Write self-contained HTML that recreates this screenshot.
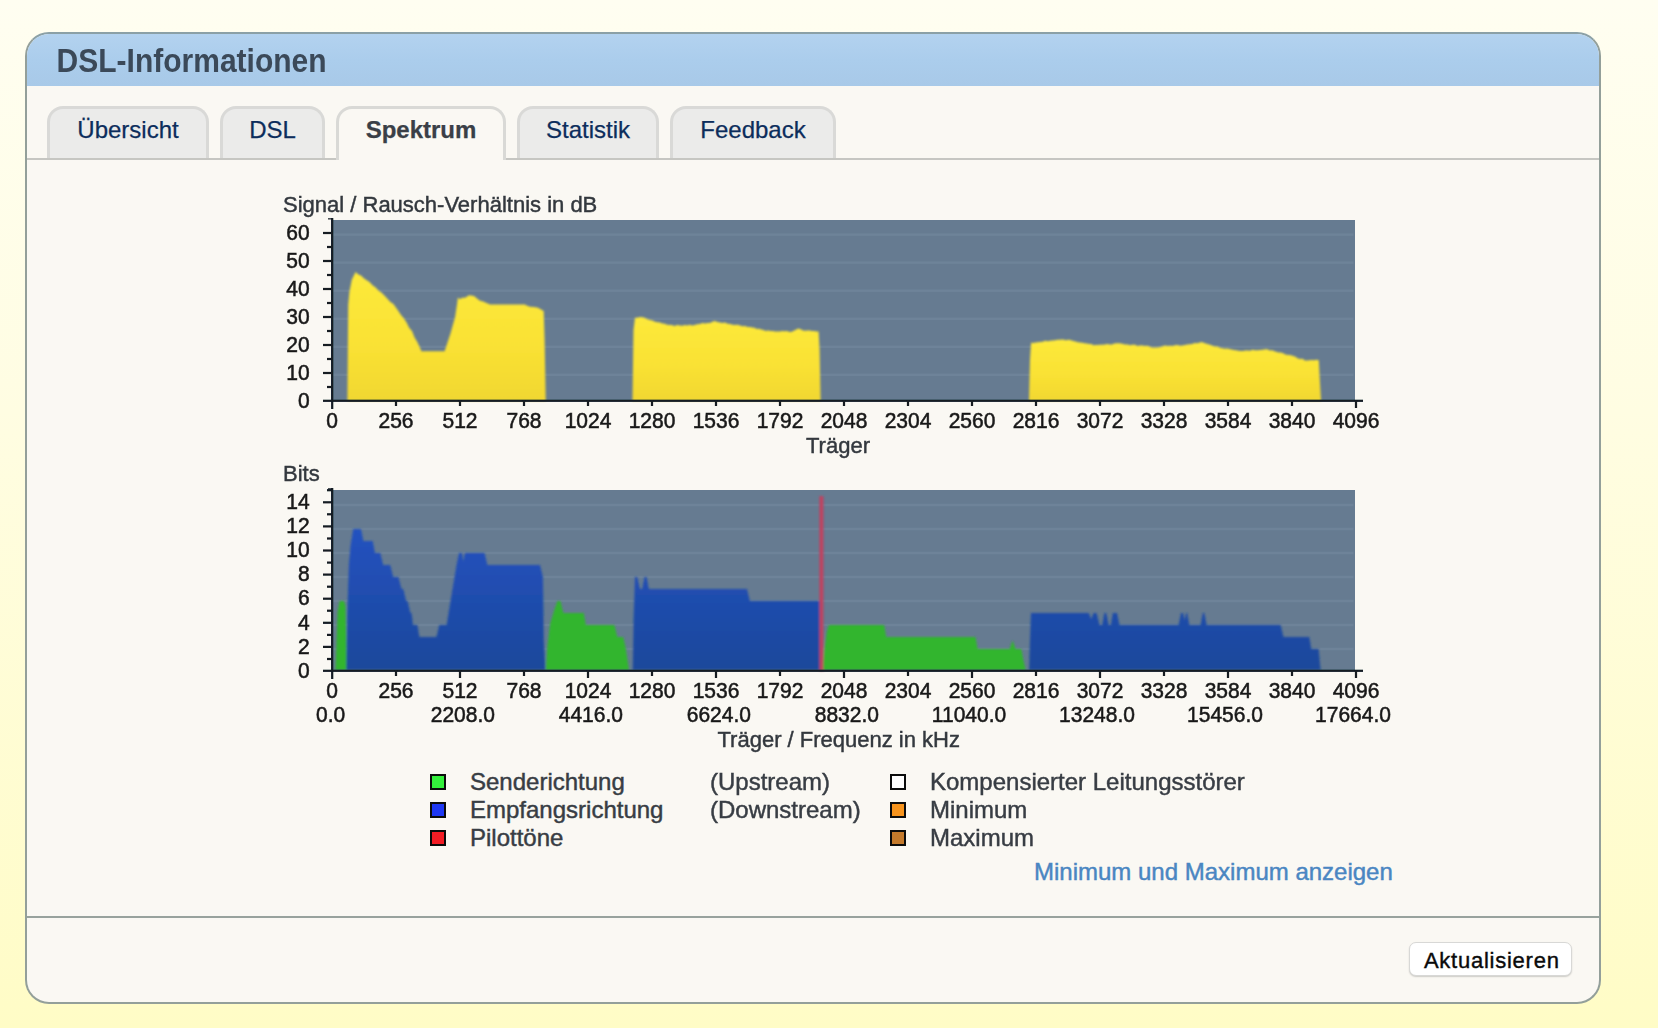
<!DOCTYPE html>
<html lang="de">
<head>
<meta charset="utf-8">
<title>DSL-Informationen</title>
<style>
html,body{margin:0;padding:0;}
body{width:1658px;height:1028px;overflow:hidden;position:relative;
  font-family:"Liberation Sans",sans-serif;color:#3a4048;
  background:linear-gradient(180deg,#fffef1 0%,#fffde2 40%,#fffcc6 100%);}
#panel{position:absolute;left:25px;top:32px;width:1572px;height:968px;border:2px solid #939f9a;border-top-color:#8ba0a6;
  border-radius:24px;background:#faf8f3;overflow:hidden;}
#head{position:absolute;left:0;top:0;width:100%;height:52px;
  background:linear-gradient(180deg,#b3d2ef 0%,#abcdec 50%,#a8c9e8 100%);}
#head h1{margin:0;position:absolute;left:29.6px;top:10px;font-size:30px;line-height:36px;font-weight:bold;color:#3b4959;transform:scale(1.0,1.085);transform-origin:0 29px;white-space:nowrap;}
#tabline{position:absolute;left:0;top:124px;width:100%;height:2px;background:#c6c6c2;}
.tab{position:absolute;top:72px;height:52px;box-sizing:border-box;border:3px solid #d9d9d7;border-bottom:none;
  border-radius:16px 16px 0 0;background:#ebebea;color:#0c2d5c;font-size:24px;line-height:41px;text-align:center;-webkit-text-stroke:0.25px;}
.tab.act{background:#faf8f3;color:#3a3f47;font-weight:bold;height:54px;border-color:#d9d9d6;z-index:3;}
.t{position:absolute;white-space:nowrap;-webkit-text-stroke:0.45px;}
#sep{position:absolute;left:0;top:882px;width:100%;height:2px;background:#98a29d;}
#btn{position:absolute;left:1382px;top:908px;width:161px;height:32px;border:1px solid #d8d8d6;border-radius:7px;
  background:#fff;box-shadow:0 1px 1.5px rgba(0,0,0,0.18);font-size:22px;line-height:35.4px;text-align:center;color:#0a0a0a;letter-spacing:0.75px;text-indent:2.6px;-webkit-text-stroke:0.4px;overflow:hidden;}
.sq{position:absolute;width:12px;height:12px;border:2px solid #0c0c0c;}
.lg{position:absolute;font-size:24px;line-height:28px;color:#383d44;white-space:nowrap;-webkit-text-stroke:0.45px #383d44;}
</style>
</head>
<body>
<div id="panel">
  <div id="head"><h1>DSL-Informationen</h1></div>
  <div class="tab" style="left:20px;width:162px;">Übersicht</div>
  <div class="tab" style="left:193px;width:105px;">DSL</div>
  <div class="tab act" style="left:309px;width:170px;">Spektrum</div>
  <div class="tab" style="left:490px;width:142px;">Statistik</div>
  <div class="tab" style="left:643px;width:166px;">Feedback</div>
  <div id="tabline"></div>
  <div id="sep"></div>
  <div id="btn">Aktualisieren</div>
</div>
<svg width="1658" height="1028" viewBox="0 0 1658 1028" style="position:absolute;left:0;top:0">
<defs>
<linearGradient id="gy" x1="0" y1="0" x2="0" y2="1"><stop offset="0" stop-color="#fde93b"/><stop offset="0.6" stop-color="#f9e134"/><stop offset="1" stop-color="#f1d730"/></linearGradient>
<linearGradient id="gb" gradientUnits="userSpaceOnUse" x1="0" y1="528" x2="0" y2="670"><stop offset="0" stop-color="#2452c0"/><stop offset="1" stop-color="#1b489b"/></linearGradient>
<filter id="bl" x="-2%" y="-2%" width="104%" height="104%"><feGaussianBlur stdDeviation="0.85"/></filter>
<filter id="bt" x="-2%" y="-10%" width="104%" height="120%"><feGaussianBlur stdDeviation="0.7"/></filter>
<filter id="ba" x="-2%" y="-10%" width="104%" height="120%"><feGaussianBlur stdDeviation="0.45"/></filter>
</defs>
<rect x="331" y="220" width="1024" height="180" fill="#667b91"/>
<rect x="333" y="373.6" width="1020.5" height="2.4" fill="#7990a5" opacity="0.42" filter="url(#ba)"/>
<rect x="333" y="345.6" width="1020.5" height="2.4" fill="#7990a5" opacity="0.42" filter="url(#ba)"/>
<rect x="333" y="317.6" width="1020.5" height="2.4" fill="#7990a5" opacity="0.42" filter="url(#ba)"/>
<rect x="333" y="289.5" width="1020.5" height="2.4" fill="#7990a5" opacity="0.42" filter="url(#ba)"/>
<rect x="333" y="261.4" width="1020.5" height="2.4" fill="#7990a5" opacity="0.42" filter="url(#ba)"/>
<rect x="333" y="233.4" width="1020.5" height="2.4" fill="#7990a5" opacity="0.42" filter="url(#ba)"/>
<g filter="url(#bl)">
<path d="M347.4 401.0 L347.4 400.0 L348.2 305.0 L349.4 292.0 L351.8 279.8 L355.6 272.1 L358.3 274.5 L361.0 275.4 L363.8 278.3 L366.7 280.2 L369.5 282.0 L372.5 285.3 L375.4 287.3 L378.4 290.5 L381.4 292.6 L384.4 295.5 L387.4 298.7 L390.4 302.1 L393.4 304.0 L395.9 307.4 L398.5 311.2 L401.2 315.3 L404.0 318.5 L406.7 322.7 L409.3 327.9 L412.0 331.1 L414.6 337.5 L417.3 342.0 L419.9 347.6 L421.3 351.0 L421.3 351.3 L444.6 351.3 L444.6 351.3 L447.5 342.4 L450.4 333.8 L455.1 317.1 L457.1 303.8 L457.9 297.5 L460.0 299.3 L462.0 297.8 L465.0 297.8 L469.1 295.2 L474.0 296.1 L477.0 298.6 L480.0 300.7 L483.2 301.6 L486.4 303.0 L489.6 304.2 L489.6 304.5 L525.3 304.5 L525.3 305.0 L530.0 306.7 L534.0 307.1 L538.0 307.8 L543.7 311.0 L544.6 340.0 L545.7 400.0 L545.7 401.0 Z" fill="url(#gy)"/>
<path d="M632.5 401.0 L632.5 400.0 L633.5 330.0 L635.0 317.8 L637.5 317.7 L640.0 317.1 L643.9 317.4 L647.0 318.9 L650.0 319.9 L652.5 320.5 L655.0 321.8 L657.5 322.3 L660.0 322.5 L662.3 323.4 L664.7 323.8 L667.0 324.7 L669.4 325.0 L671.7 324.9 L674.5 325.9 L677.2 325.0 L680.0 325.5 L682.4 325.8 L684.8 325.1 L687.2 325.4 L689.6 324.8 L692.0 325.5 L694.7 325.0 L697.3 324.2 L700.0 324.0 L702.5 323.1 L705.0 323.4 L707.5 323.1 L710.0 322.9 L712.4 321.7 L714.8 321.1 L717.4 322.1 L720.0 322.5 L722.5 323.0 L725.0 322.6 L727.5 323.7 L730.0 324.0 L732.5 324.8 L735.0 324.9 L737.5 324.7 L740.0 325.4 L742.5 326.2 L745.0 325.9 L747.5 327.0 L750.0 327.1 L752.2 327.5 L754.5 327.8 L756.8 329.1 L759.0 328.8 L761.2 329.4 L763.5 330.0 L765.8 331.0 L768.0 330.5 L770.4 331.0 L772.8 331.1 L775.2 331.6 L777.6 331.5 L780.0 331.6 L782.2 331.0 L784.4 331.2 L786.6 331.1 L788.9 331.8 L791.1 331.9 L793.3 331.0 L795.8 329.7 L798.4 328.5 L800.7 329.3 L803.0 330.5 L805.2 330.8 L807.5 330.5 L809.7 330.4 L811.9 331.0 L814.1 331.1 L816.4 331.5 L818.6 331.6 L819.6 350.0 L820.6 400.0 L820.6 401.0 Z" fill="url(#gy)"/>
<path d="M1029.0 401.0 L1029.0 400.0 L1030.0 360.0 L1031.1 342.7 L1033.3 343.1 L1035.5 342.6 L1037.8 342.2 L1040.0 342.1 L1042.6 341.8 L1045.2 340.7 L1047.7 341.3 L1050.3 340.7 L1052.9 340.4 L1055.3 340.3 L1057.6 339.7 L1060.0 339.7 L1062.9 339.5 L1065.9 340.2 L1068.8 339.7 L1071.0 340.2 L1073.3 341.0 L1075.5 341.5 L1077.8 342.2 L1080.0 342.5 L1082.2 342.7 L1084.5 343.2 L1086.8 343.4 L1089.0 344.0 L1091.2 343.9 L1093.5 345.2 L1095.8 345.1 L1098.0 344.9 L1100.3 344.8 L1102.7 344.8 L1105.0 344.6 L1107.3 344.0 L1109.6 344.6 L1112.0 344.4 L1114.3 343.5 L1116.6 343.2 L1119.4 343.2 L1122.2 343.7 L1125.0 344.4 L1127.5 344.5 L1130.0 345.3 L1132.5 344.7 L1135.0 344.7 L1137.5 346.0 L1140.0 345.6 L1142.4 345.4 L1144.8 346.1 L1147.1 345.7 L1149.5 346.6 L1151.9 347.4 L1154.2 347.5 L1156.6 347.5 L1159.0 347.2 L1162.0 346.5 L1165.0 345.4 L1167.5 346.0 L1170.0 345.7 L1172.5 345.9 L1175.0 345.3 L1177.5 345.1 L1180.0 345.7 L1182.5 345.5 L1185.0 345.0 L1187.5 344.5 L1190.0 344.2 L1192.3 343.9 L1194.6 343.0 L1196.9 343.2 L1199.2 342.7 L1201.5 342.1 L1204.3 342.9 L1207.2 344.0 L1210.0 344.7 L1212.5 345.8 L1215.0 346.6 L1217.5 346.6 L1220.0 347.7 L1222.5 348.3 L1225.0 348.8 L1227.2 348.6 L1229.4 348.9 L1231.6 349.4 L1233.8 349.9 L1236.0 350.3 L1238.3 350.8 L1240.7 351.1 L1243.0 351.0 L1245.3 350.5 L1247.7 350.6 L1250.0 350.8 L1252.5 349.7 L1255.1 350.2 L1257.6 350.3 L1260.1 350.0 L1262.7 349.8 L1265.2 349.3 L1267.5 349.3 L1269.7 350.4 L1272.0 350.2 L1275.2 351.6 L1278.5 352.6 L1280.8 352.6 L1283.1 353.3 L1285.4 354.6 L1287.7 355.1 L1290.0 355.1 L1292.5 355.8 L1295.0 356.6 L1297.5 358.2 L1300.0 358.9 L1302.5 358.8 L1305.0 360.4 L1307.3 360.6 L1309.6 360.3 L1311.9 360.0 L1314.2 360.3 L1316.5 359.8 L1318.8 360.3 L1319.8 380.0 L1321.0 400.0 L1321.0 401.0 Z" fill="url(#gy)"/>
</g>
<rect x="331" y="490" width="1024" height="180" fill="#667b91"/>
<rect x="333" y="647.8" width="1020.5" height="2.4" fill="#7990a5" opacity="0.42" filter="url(#ba)"/>
<rect x="333" y="623.8" width="1020.5" height="2.4" fill="#7990a5" opacity="0.42" filter="url(#ba)"/>
<rect x="333" y="599.8" width="1020.5" height="2.4" fill="#7990a5" opacity="0.42" filter="url(#ba)"/>
<rect x="333" y="575.8" width="1020.5" height="2.4" fill="#7990a5" opacity="0.42" filter="url(#ba)"/>
<rect x="333" y="551.8" width="1020.5" height="2.4" fill="#7990a5" opacity="0.42" filter="url(#ba)"/>
<rect x="333" y="527.8" width="1020.5" height="2.4" fill="#7990a5" opacity="0.42" filter="url(#ba)"/>
<rect x="333" y="503.8" width="1020.5" height="2.4" fill="#7990a5" opacity="0.42" filter="url(#ba)"/>
<g filter="url(#bl)">
<path d="M335.5 670.0 L336.4 645.0 L337.6 612.0 L339.6 601.0 L344.0 601.0 L345.5 606.0 L346.8 670.0 Z" fill="#30b52f"/>
<path d="M545.8 670.0 L547.3 646.8 L550.2 623.5 L554.6 608.9 L557.5 601.0 L560.4 601.0 L563.3 613.0 L583.8 613.0 L585.8 625.0 L614.4 625.0 L617.3 637.0 L623.2 637.0 L625.5 646.8 L629.0 670.0 Z" fill="#30b52f"/>
<path d="M822.5 670.0 L824.8 646.8 L826.8 632.0 L828.8 625.0 L884.2 625.0 L886.2 637.0 L975.5 637.0 L977.6 649.0 L1009.7 649.0 L1012.6 640.6 L1015.5 649.0 L1021.3 649.0 L1023.7 661.4 L1025.7 670.0 Z" fill="#30b52f"/>
<path d="M346.3 670.0 L347.2 620.0 L348.8 566.0 L350.6 545.0 L353.2 529.0 L361.0 529.0 L363.4 541.0 L372.7 541.0 L375.0 553.0 L380.3 553.0 L383.2 565.0 L390.2 565.0 L393.2 577.0 L398.4 577.0 L401.5 589.0 L403.3 589.0 L406.2 601.0 L407.6 601.0 L410.4 613.0 L411.6 613.0 L413.0 625.0 L417.4 625.0 L419.4 637.0 L436.4 637.0 L439.3 625.0 L446.6 625.0 L448.6 613.0 L450.5 601.0 L452.5 589.0 L454.5 577.0 L456.5 565.0 L459.1 553.0 L462.0 553.0 L463.2 561.4 L465.0 553.0 L484.5 553.0 L487.4 565.0 L540.0 565.0 L542.9 577.0 L543.8 640.0 L545.2 670.0 Z" fill="url(#gb)"/>
<path d="M632.8 670.0 L633.6 620.0 L634.9 577.0 L637.2 577.0 L640.0 589.0 L642.2 589.0 L644.5 577.0 L646.6 577.0 L648.9 589.0 L747.0 589.0 L749.9 601.0 L821.0 601.0 L821.0 670.0 Z" fill="url(#gb)"/>
<path d="M1029.2 670.0 L1030.0 640.0 L1031.0 613.0 L1088.8 613.0 L1091.2 619.0 L1093.6 613.0 L1096.5 613.0 L1099.6 625.0 L1102.2 625.0 L1104.4 613.0 L1106.2 613.0 L1108.7 625.0 L1110.8 625.0 L1112.9 613.0 L1117.0 613.0 L1119.5 625.0 L1178.6 625.0 L1181.0 613.0 L1183.0 613.0 L1184.7 620.2 L1186.2 613.0 L1187.2 613.0 L1189.3 625.0 L1200.6 625.0 L1202.8 613.0 L1204.3 613.0 L1206.6 625.0 L1280.6 625.0 L1283.5 637.0 L1309.3 637.0 L1311.3 649.0 L1318.6 649.0 L1319.6 660.0 L1320.6 670.0 Z" fill="url(#gb)"/>
<rect x="819.4" y="496" width="4" height="175" fill="#bf4360"/>
</g>
<g fill="#121a22" filter="url(#ba)">
<rect x="331.1" y="218" width="2.2" height="191"/>
<rect x="323" y="399.7" width="1040" height="2.2"/>
<rect x="328" y="218" width="4" height="1.6" opacity="0.75"/>
<rect x="323" y="371.9" width="9" height="2.2"/>
<rect x="323" y="343.9" width="9" height="2.2"/>
<rect x="323" y="315.9" width="9" height="2.2"/>
<rect x="323" y="287.9" width="9" height="2.2"/>
<rect x="323" y="259.9" width="9" height="2.2"/>
<rect x="323" y="231.9" width="9" height="2.2"/>
<rect x="327" y="385.9" width="5" height="2.2"/>
<rect x="327" y="357.9" width="5" height="2.2"/>
<rect x="327" y="329.9" width="5" height="2.2"/>
<rect x="327" y="301.9" width="5" height="2.2"/>
<rect x="327" y="273.9" width="5" height="2.2"/>
<rect x="327" y="245.9" width="5" height="2.2"/>
<rect x="394.9" y="400" width="2.2" height="6"/>
<rect x="458.9" y="400" width="2.2" height="6"/>
<rect x="522.9" y="400" width="2.2" height="6"/>
<rect x="586.9" y="400" width="2.2" height="6"/>
<rect x="650.9" y="400" width="2.2" height="6"/>
<rect x="714.9" y="400" width="2.2" height="6"/>
<rect x="778.9" y="400" width="2.2" height="6"/>
<rect x="842.9" y="400" width="2.2" height="6"/>
<rect x="906.9" y="400" width="2.2" height="6"/>
<rect x="970.9" y="400" width="2.2" height="6"/>
<rect x="1034.9" y="400" width="2.2" height="6"/>
<rect x="1098.9" y="400" width="2.2" height="6"/>
<rect x="1162.9" y="400" width="2.2" height="6"/>
<rect x="1226.9" y="400" width="2.2" height="6"/>
<rect x="1290.9" y="400" width="2.2" height="6"/>
<rect x="1354.9" y="400" width="2.2" height="8"/>
<rect x="331.1" y="488" width="2.2" height="191"/>
<rect x="323" y="669.7" width="1040" height="2.2"/>
<rect x="328" y="488" width="4" height="1.6" opacity="0.75"/>
<rect x="323" y="645.8" width="9" height="2.2"/>
<rect x="323" y="621.7" width="9" height="2.2"/>
<rect x="323" y="597.6" width="9" height="2.2"/>
<rect x="323" y="573.5" width="9" height="2.2"/>
<rect x="323" y="549.4" width="9" height="2.2"/>
<rect x="323" y="525.3" width="9" height="2.2"/>
<rect x="323" y="501.2" width="9" height="2.2"/>
<rect x="327" y="657.9" width="5" height="2.2"/>
<rect x="327" y="633.8" width="5" height="2.2"/>
<rect x="327" y="609.6" width="5" height="2.2"/>
<rect x="327" y="585.6" width="5" height="2.2"/>
<rect x="327" y="561.5" width="5" height="2.2"/>
<rect x="327" y="537.4" width="5" height="2.2"/>
<rect x="327" y="513.2" width="5" height="2.2"/>
<rect x="327" y="489.1" width="5" height="2.2"/>
<rect x="394.9" y="670" width="2.2" height="6"/>
<rect x="458.9" y="670" width="2.2" height="8"/>
<rect x="522.9" y="670" width="2.2" height="6"/>
<rect x="586.9" y="670" width="2.2" height="8"/>
<rect x="650.9" y="670" width="2.2" height="6"/>
<rect x="714.9" y="670" width="2.2" height="8"/>
<rect x="778.9" y="670" width="2.2" height="6"/>
<rect x="842.9" y="670" width="2.2" height="8"/>
<rect x="906.9" y="670" width="2.2" height="6"/>
<rect x="970.9" y="670" width="2.2" height="8"/>
<rect x="1034.9" y="670" width="2.2" height="6"/>
<rect x="1098.9" y="670" width="2.2" height="8"/>
<rect x="1162.9" y="670" width="2.2" height="6"/>
<rect x="1226.9" y="670" width="2.2" height="8"/>
<rect x="1290.9" y="670" width="2.2" height="6"/>
<rect x="1354.9" y="670" width="2.2" height="8"/>
</g>
<g font-family="Liberation Sans, sans-serif" font-size="22" fill="#1a1a1a" stroke="#1a1a1a" stroke-width="0.55" filter="url(#bt)">
<text transform="translate(309.6 408.4) scale(0.955 0.985)" text-anchor="end">0</text>
<text transform="translate(309.6 380.4) scale(0.955 0.985)" text-anchor="end">10</text>
<text transform="translate(309.6 352.4) scale(0.955 0.985)" text-anchor="end">20</text>
<text transform="translate(309.6 324.4) scale(0.955 0.985)" text-anchor="end">30</text>
<text transform="translate(309.6 296.4) scale(0.955 0.985)" text-anchor="end">40</text>
<text transform="translate(309.6 268.4) scale(0.955 0.985)" text-anchor="end">50</text>
<text transform="translate(309.6 240.4) scale(0.955 0.985)" text-anchor="end">60</text>
<text transform="translate(309.6 677.7) scale(0.955 0.985)" text-anchor="end">0</text>
<text transform="translate(309.6 653.6) scale(0.955 0.985)" text-anchor="end">2</text>
<text transform="translate(309.6 629.5) scale(0.955 0.985)" text-anchor="end">4</text>
<text transform="translate(309.6 605.4) scale(0.955 0.985)" text-anchor="end">6</text>
<text transform="translate(309.6 581.3) scale(0.955 0.985)" text-anchor="end">8</text>
<text transform="translate(309.6 557.2) scale(0.955 0.985)" text-anchor="end">10</text>
<text transform="translate(309.6 533.1) scale(0.955 0.985)" text-anchor="end">12</text>
<text transform="translate(309.6 509.0) scale(0.955 0.985)" text-anchor="end">14</text>
<text transform="translate(332.0 428.0) scale(0.955 0.985)" text-anchor="middle">0</text>
<text transform="translate(332.0 698.0) scale(0.955 0.985)" text-anchor="middle">0</text>
<text transform="translate(330.7 722.0) scale(0.955 0.985)" text-anchor="middle">0.0</text>
<text transform="translate(396.0 428.0) scale(0.955 0.985)" text-anchor="middle">256</text>
<text transform="translate(396.0 698.0) scale(0.955 0.985)" text-anchor="middle">256</text>
<text transform="translate(460.0 428.0) scale(0.955 0.985)" text-anchor="middle">512</text>
<text transform="translate(460.0 698.0) scale(0.955 0.985)" text-anchor="middle">512</text>
<text transform="translate(462.8 722.0) scale(0.955 0.985)" text-anchor="middle">2208.0</text>
<text transform="translate(524.0 428.0) scale(0.955 0.985)" text-anchor="middle">768</text>
<text transform="translate(524.0 698.0) scale(0.955 0.985)" text-anchor="middle">768</text>
<text transform="translate(588.0 428.0) scale(0.955 0.985)" text-anchor="middle">1024</text>
<text transform="translate(588.0 698.0) scale(0.955 0.985)" text-anchor="middle">1024</text>
<text transform="translate(590.8 722.0) scale(0.955 0.985)" text-anchor="middle">4416.0</text>
<text transform="translate(652.0 428.0) scale(0.955 0.985)" text-anchor="middle">1280</text>
<text transform="translate(652.0 698.0) scale(0.955 0.985)" text-anchor="middle">1280</text>
<text transform="translate(716.0 428.0) scale(0.955 0.985)" text-anchor="middle">1536</text>
<text transform="translate(716.0 698.0) scale(0.955 0.985)" text-anchor="middle">1536</text>
<text transform="translate(718.8 722.0) scale(0.955 0.985)" text-anchor="middle">6624.0</text>
<text transform="translate(780.0 428.0) scale(0.955 0.985)" text-anchor="middle">1792</text>
<text transform="translate(780.0 698.0) scale(0.955 0.985)" text-anchor="middle">1792</text>
<text transform="translate(844.0 428.0) scale(0.955 0.985)" text-anchor="middle">2048</text>
<text transform="translate(844.0 698.0) scale(0.955 0.985)" text-anchor="middle">2048</text>
<text transform="translate(846.8 722.0) scale(0.955 0.985)" text-anchor="middle">8832.0</text>
<text transform="translate(908.0 428.0) scale(0.955 0.985)" text-anchor="middle">2304</text>
<text transform="translate(908.0 698.0) scale(0.955 0.985)" text-anchor="middle">2304</text>
<text transform="translate(972.0 428.0) scale(0.955 0.985)" text-anchor="middle">2560</text>
<text transform="translate(972.0 698.0) scale(0.955 0.985)" text-anchor="middle">2560</text>
<text transform="translate(969.0 722.0) scale(0.955 0.985)" text-anchor="middle">11040.0</text>
<text transform="translate(1036.0 428.0) scale(0.955 0.985)" text-anchor="middle">2816</text>
<text transform="translate(1036.0 698.0) scale(0.955 0.985)" text-anchor="middle">2816</text>
<text transform="translate(1100.0 428.0) scale(0.955 0.985)" text-anchor="middle">3072</text>
<text transform="translate(1100.0 698.0) scale(0.955 0.985)" text-anchor="middle">3072</text>
<text transform="translate(1097.0 722.0) scale(0.955 0.985)" text-anchor="middle">13248.0</text>
<text transform="translate(1164.0 428.0) scale(0.955 0.985)" text-anchor="middle">3328</text>
<text transform="translate(1164.0 698.0) scale(0.955 0.985)" text-anchor="middle">3328</text>
<text transform="translate(1228.0 428.0) scale(0.955 0.985)" text-anchor="middle">3584</text>
<text transform="translate(1228.0 698.0) scale(0.955 0.985)" text-anchor="middle">3584</text>
<text transform="translate(1225.0 722.0) scale(0.955 0.985)" text-anchor="middle">15456.0</text>
<text transform="translate(1292.0 428.0) scale(0.955 0.985)" text-anchor="middle">3840</text>
<text transform="translate(1292.0 698.0) scale(0.955 0.985)" text-anchor="middle">3840</text>
<text transform="translate(1356.0 428.0) scale(0.955 0.985)" text-anchor="middle">4096</text>
<text transform="translate(1356.0 698.0) scale(0.955 0.985)" text-anchor="middle">4096</text>
<text transform="translate(1353.0 722.0) scale(0.955 0.985)" text-anchor="middle">17664.0</text>
</g>
</svg>
<div class="t" style="left:283px;top:191.5px;font-size:22px;line-height:26px;color:#33383e;">Signal / Rausch-Verhältnis in dB</div>
<div class="t" style="left:806px;top:433px;font-size:22px;line-height:26px;color:#33383e;">Träger</div>
<div class="t" style="left:283px;top:461px;font-size:22px;line-height:26px;color:#33383e;">Bits</div>
<div class="t" style="left:717.5px;top:727px;font-size:22px;line-height:26px;color:#33383e;">Träger / Frequenz in kHz</div>

<div class="sq" style="left:430px;top:774px;background:#34f03c;"></div>
<div class="sq" style="left:430px;top:802px;background:#1e38f4;"></div>
<div class="sq" style="left:430px;top:830px;background:#f21d25;"></div>
<div class="lg" style="left:470px;top:767.5px;">Senderichtung</div>
<div class="lg" style="left:470px;top:795.5px;">Empfangsrichtung</div>
<div class="lg" style="left:470px;top:823.5px;">Pilottöne</div>
<div class="lg" style="left:710px;top:767.5px;">(Upstream)</div>
<div class="lg" style="left:710px;top:795.5px;">(Downstream)</div>
<div class="sq" style="left:890px;top:774px;background:#ffffff;"></div>
<div class="sq" style="left:890px;top:802px;background:#f7941d;"></div>
<div class="sq" style="left:890px;top:830px;background:#c47a2c;"></div>
<div class="lg" style="left:930px;top:767.5px;">Kompensierter Leitungsstörer</div>
<div class="lg" style="left:930px;top:795.5px;">Minimum</div>
<div class="lg" style="left:930px;top:823.5px;">Maximum</div>
<div class="t" style="left:1034px;top:857.6px;font-size:24px;line-height:28px;color:#4a86c2;">Minimum und Maximum anzeigen</div>
</body>
</html>
